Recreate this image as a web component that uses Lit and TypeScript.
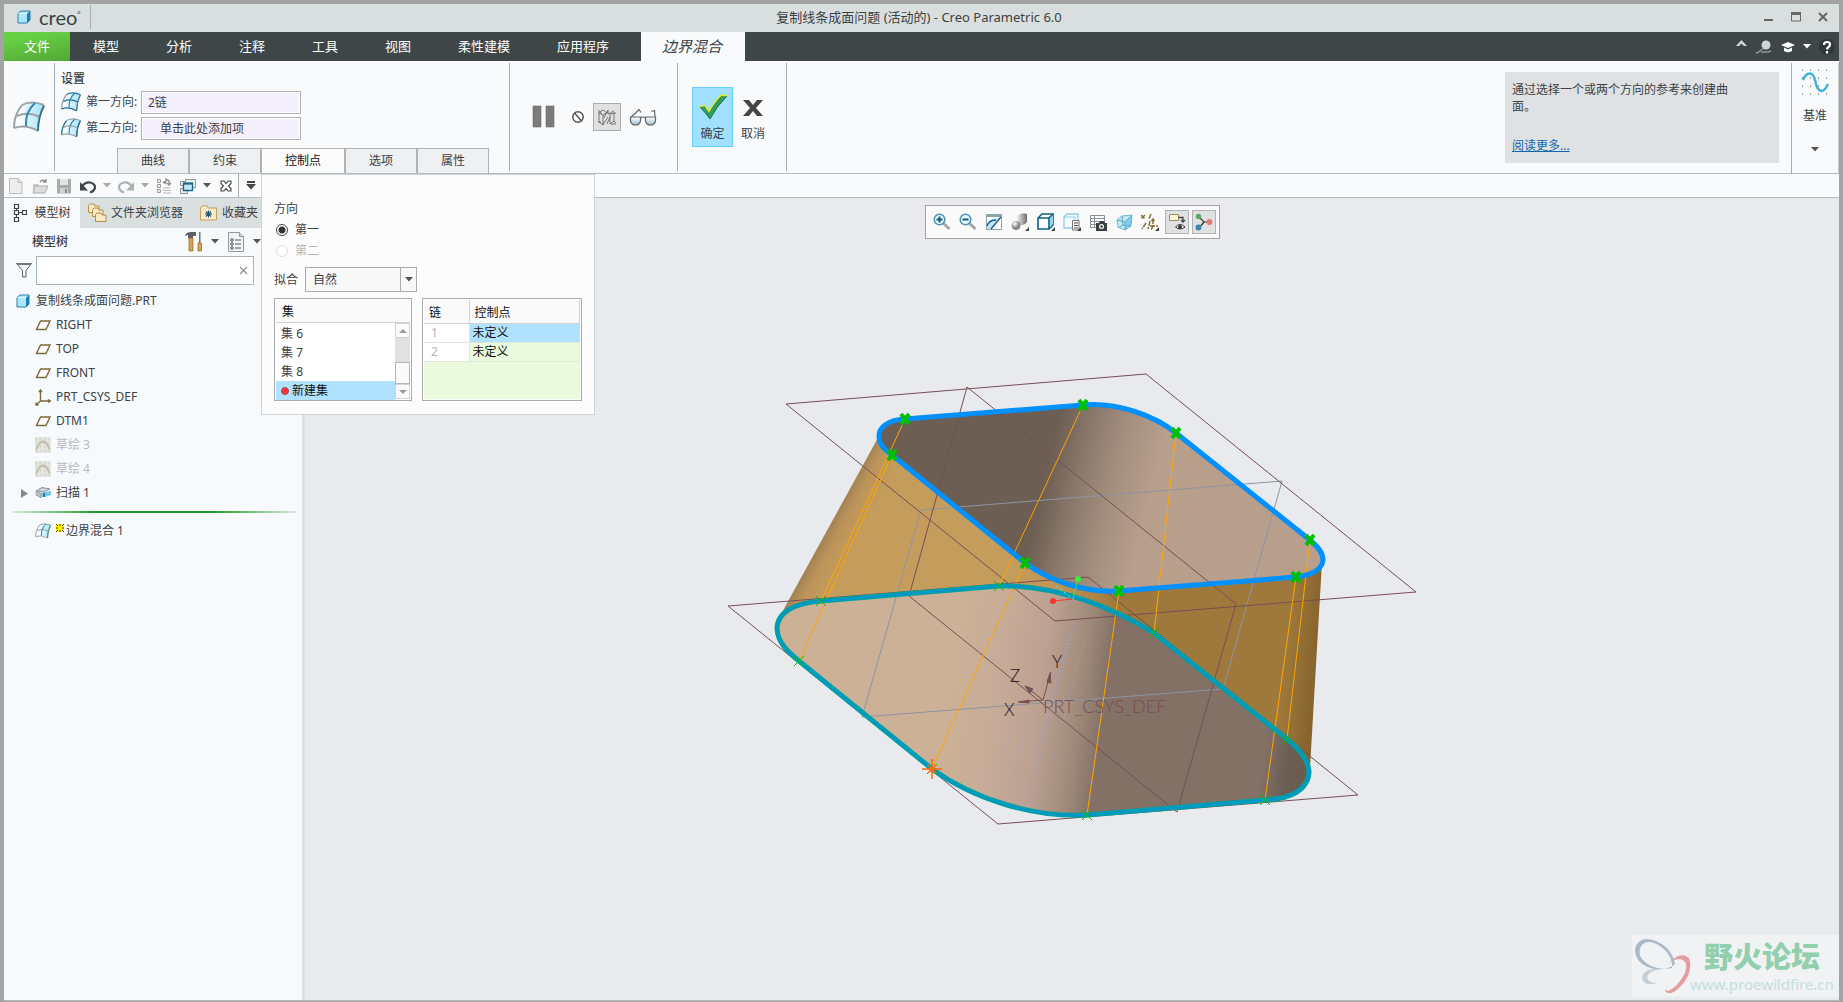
import { LitElement, html, svg, css, TemplateResult } from "lit";
import { customElement, state } from "lit/decorators.js";

const icon = (w: number, h: number, body: TemplateResult) =>
  html`<svg class="ico" width=${w} height=${h} viewBox="0 0 ${w} ${h}" aria-hidden="true">${body}</svg>`;

const caret = (fill = "#555") =>
  icon(8, 5, svg`<path d="M0 0h8L4 4.6z" fill=${fill} />`);

const partIcon = icon(14, 14, svg`
  <path d="M1 3.5 4 1h9v9l-3 3H1z" fill="#a9e8fd" stroke="#2a7ca8" />
  <path d="M10 13V4l3-3v9z" fill="#1f7fb0" /><path d="M1.5 3.5H10" stroke="#e6faff" />`);

const patch = (w: number, mode: string) => html`<svg class="ico" width=${w} height=${w} viewBox="0 0 32 32" aria-hidden="true">
  <defs><linearGradient id="pg" x1="0" x2="1"><stop offset="0.2" stop-color="#fafcfd" /><stop offset="1" stop-color="#9fe3fb" /></linearGradient></defs>
  <path d="M9 4Q18-1 31 4Q25 16 25 30Q13 23 1 27Q1 14 9 4z" fill="url(#pg)" />
  <path d="M9 4Q1 14 1 27M31 4Q25 16 25 30" fill="none" stroke=${mode === "b" ? "#1c6e96" : "#9aa3a8"} stroke-width="2" />
  <path d="M9 4Q18-1 31 4M1 27Q13 23 25 30M4 15Q15 10 27 16" fill="none" stroke=${mode === "a" ? "#1c6e96" : "#9aa3a8"} stroke-width="2" />
  <path d="M22 2Q12 11 13 25" fill="none" stroke="#2a88b4" stroke-width="2" />
  <path d="M31 5Q25 16 25 30" fill="none" stroke="#2f6f8c" stroke-width="1.6" /></svg>`;

const planeIcon = icon(16, 16, svg`<path d="M5.500 4h9.500l-4 8.500H1.500z" fill="#fbfbf6" stroke="#7d6a3d" stroke-width="1.400" />`);
const csysIcon = icon(16, 17, svg`<path d="M5.500 12V1M5.500 12 1 16M5.500 12H15M4 3l1.500-2L7 3M13 10.500 15.500 12l-2.500 1.500M1 13.500V16h2.500" fill="none" stroke="#7d6a3d" stroke-width="1.400" />`);
const sketchIcon = icon(16, 16, svg`<rect width="16" height="16" fill="#e3e3e0" /><path d="M1.500 12.500Q4 4.500 8 4.500T14.500 12.500" fill="none" stroke="#c0bda4" stroke-width="1.800" /><path d="M1 2h15M1 6h15M1 10h15M1 14h15" stroke="#c5c2b4" stroke-dasharray="1 3" />`);
const sweepIcon = icon(17, 14, svg`<path d="M1 5 7 1.500l8 1.500-6 3z" fill="#cfd6da" stroke="#8a9499" /><path d="M1 5v4l5 3V7l10-2v4l-6 2-1.500-1L6 12" fill="#7fc4e2" /><path d="M1 5l5 2v5L1 9z" fill="#b6c2c8" stroke="#8a9499" stroke-width=".6" /><path d="M9 7v4" stroke="#1c7dab" stroke-width="2" />`);

const undo = (c: string, flip = false) => icon(16, 16, svg`<g transform=${flip ? "translate(16 0) scale(-1 1)" : ""}>
  <path d="M2 8.500Q5 4 10 4.500Q15 5.500 15 9.500Q14.500 13 10 14.500" fill="none" stroke=${c} stroke-width="2.200" /><path d="M0 4v8.500h8z" fill=${c} /></g>`);

const quickIcons = {
  create: icon(16, 16, svg`<path d="M1.500.500h8.500l4 4v11H1.500z" fill="#eeeeec" stroke="#b9bcbc" /><path d="M10 .500v4h4" fill="#dcdcda" stroke="#b9bcbc" />`),
  open: icon(16, 16, svg`<path d="M1 6h5l1 2h6v7H1z" fill="#c9c9c7" /><path d="M3 8h13l-3 7H1z" fill="#dddddb" stroke="#adadab" /><path d="M8 4q2-3 5-1M14 1v3h-3" fill="none" stroke="#8e8e8c" stroke-width="1.500" />`),
  save: icon(16, 16, svg`<path d="M1 1h14v14.500H1z" fill="#a9abab" /><path d="M4 1h8v6H4z" fill="#e3e4e4" /><path d="M4 10h8v5H4z" fill="#d0d2d2" /><path d="M9 11h2v4H9z" fill="#8c8e8e" />`),
  regen: icon(16, 16, svg`<path d="M1.500 1.500h3v3h-3zM1.500 6.500h3v3h-3zM1.500 11.500h3v3h-3z" fill="#eee" stroke="#9a9a9a" /><path d="M7 10h7M7 12.500h8M7 15h8" stroke="#b5b5b5" /><path d="M7 4h3V1l3 2M10 6l-3-2M13 2v5M15 5l-2 2-2-2" fill="none" stroke="#8c8c8c" stroke-width="1.300" />`),
  windows: icon(16, 16, svg`<path d="M5.500 1.500h10v8h-10zM.500 3.500h5v4h-5zM.500 10.500h7v5h-7z" fill="#eef0f0" stroke="#8d9294" /><path d="M3.500 5.500h9v7h-9z" fill="#bdeafb" stroke="#1b6384" stroke-width="1.300" /><path d="M3 5.500h10" stroke="#1b6384" stroke-width="2" />`),
  close: icon(12, 12, svg`<path d="M1 1h3l2 2.500L8 1h3v2.500L8.500 6 11 8.500V11H8L6 8.500 4 11H1V8.500L3.500 6 1 3.500z" fill="#fff" stroke="#444" stroke-width="1.100" />`),
};

const mag = (plus: boolean) => icon(18, 18, svg`<path d="M10 10l6.500 6" stroke="#a3a7aa" stroke-width="3" /><circle cx="6.500" cy="6.500" r="5.300" fill="#e4f6fd" stroke="#4e93b2" stroke-width="1.500" /><path d=${plus ? "M3.500 6.500h6M6.500 3.500v6" : "M3.500 6.500h6"} stroke="#14577a" stroke-width="2" />`);
const more = svg`<path d="M18 14v4h-4z" fill="#444" />`;
const viewIcons = [
  { n: "放大", i: mag(true) },
  { n: "缩小", i: mag(false) },
  { n: "重画", i: icon(16, 16, svg`<path d="M0 0h16v16H0z" fill="#8fa3ac" /><path d="M1 3h14v12H1z" fill="#fdfefe" /><path d="M15 3 5 15H1v-3q2-6 6-7z" fill="#bfe6f5" /><path d="M15 3v12H5z" fill="#fff" /><path d="M15 3 5 15M1 12q2-6 9-6" fill="none" stroke="#12597e" stroke-width="1.300" />`) },
  { n: "着色", i: icon(18, 18, svg`<defs><radialGradient id="gs" cx=".35" cy=".3"><stop offset="0" stop-color="#fff" /><stop offset="1" stop-color="#828282" /></radialGradient><linearGradient id="gt"><stop offset="0" stop-color="#eee" /><stop offset="1" stop-color="#6e6e6e" /></linearGradient></defs><path d="M6 3q5-4 10-2v8q-3 4-9 3z" fill="url(#gt)" /><circle cx="5" cy="12.500" r="4.500" fill="url(#gs)" />${more}`) },
  { n: "显示样式", i: icon(18, 18, svg`<path d="M1 5 5 1h11v11l-4 4H1z" fill="#fff" stroke="#0f5d86" stroke-width="1.600" /><path d="M13 5l3-3v9l-3 3z" fill="#8fd8f5" /><path d="M1 5h11v11M12 5l4-4" fill="none" stroke="#0f5d86" stroke-width="1.600" />${more}`) },
  { n: "已保存方向", i: icon(18, 18, svg`<path d="M1 4 4 1h11v11l-3 3H1z" fill="#f4fbfe" stroke="#8ecde6" stroke-width="1.300" /><path d="M1 4h11v11" fill="none" stroke="#8ecde6" /><path d="M9.500 7.500H16V17H9.500z" fill="#f4f4f4" stroke="#777" /><path d="M11 10h4M11 12.500h4M11 15h4" stroke="#555" />${more}`) },
  { n: "视图管理器", i: icon(17, 17, svg`<path d="M.500 1.500h14v12H.500zM.500 4.500h14M.500 7.500h14M.500 10.500h14M4.500 1.500v12" fill="#fbfbfb" stroke="#8d9092" /><path d="M6 9h3l1-2h4l1 2h2v8H6z" fill="#3d4042" /><circle cx="11.500" cy="12.500" r="2.500" fill="#fff" /><circle cx="11.500" cy="12.500" r="1.300" fill="#3d4042" />`) },
  { n: "透视图", i: icon(17, 17, svg`<path d="M1 6 6 2l10-1-1 11-6 4-7-3z" fill="#c3e8f6" stroke="#74b9d5" /><path d="M1 6l8 2 7-7M9 8v8M6 2l1 9 8 1M7 11l-5 3" fill="none" stroke="#5fa9c8" /><path d="M9 8l7-7-1 11-6 4z" fill="#63b8dc" opacity=".6" />`) },
  { n: "基准显示过滤器", i: icon(18, 18, svg`<path d="M0 2l4 4M4 2 0 6M10 1 8 6M5 10l-4 6M9 8l-2 8M9 13h8M12 6v7l-2 4M10.500 8 12 6l1.500 2" fill="none" stroke="#86703b" stroke-width="1.500" stroke-dasharray="5 1" />${more}`) },
];
const viewToggles = [
  { n: "注释显示", i: icon(18, 18, svg`<path d="M1.500 1.500h9v6h-9z" fill="#fff8d7" stroke="#9a8b66" /><path d="M11 4.500h4V9M13 7l2 2 2-2" fill="none" stroke="#444" stroke-width="1.300" /><path d="M7.500 14q4.500-5 9.500 0q-5 4-9.500 0z" fill="#fff" stroke="#333" /><circle cx="12" cy="14" r="2" fill="#333" />`) },
  { n: "旋转中心", i: icon(18, 18, svg`<path d="M4 4l5 5h6M9 9l-5 6" fill="none" stroke="#333" stroke-width="1.200" /><circle cx="3.500" cy="3.500" r="2.700" fill="#5ba867" /><circle cx="14.500" cy="9" r="2.900" fill="#e9797b" /><circle cx="3.500" cy="14.500" r="2.900" fill="#3686ae" />`) },
];

const UPPER = "M905 419C888 420 879 427 879 436C879 445 885 450 892 455L1025 563C1050 581 1085 593 1119 591L1296 577C1312 575 1322 569 1323 560C1323 552 1317 546 1310 540L1176 433C1155 416 1118 402 1083 405Z";
const LOWER = "M821 601C795 603 777 612 777 629C778 643 788 652 799 661L932 769C975 800 1035 818 1087 815L1265 800C1290 799 1309 790 1309 771C1308 759 1298 748 1287 739L1154 633C1114 608 1055 584 999 586Z";
const RULINGS = [
  [905, 419, 821, 601], [892, 455, 799, 661], [1083, 405, 999, 586], [1025, 563, 932, 769],
  [1119, 591, 1087, 815], [1176, 433, 1154, 633], [1310, 540, 1287, 739], [1296, 577, 1265, 800],
];

@customElement("model-view")
class ModelView extends LitElement {
  static styles = css`
    :host { display: block; height: 100%; }
    svg { display: block; width: 100%; height: 100%; }
    .plane { fill: none; stroke: #784e54; }
    .mid { fill: none; stroke: #8d94a2; }
    .rule { stroke: #ffa500; stroke-width: 1; }
    .upper { fill: none; stroke: #0090ff; stroke-width: 5; }
    .lower { fill: none; stroke: #00a0a8; stroke-width: 5; }
    .core { fill: none; stroke: #0090e8; stroke-width: 1; }
    .bold { stroke: #00c000; stroke-width: 4; }
    .thin { stroke: #00c000; stroke-width: 1; }
    .scan { fill: none; stroke: #9ba4e6; stroke-dasharray: 1 3; }
    .axis { font: 300 17px Lato, "Liberation Sans", sans-serif; fill: #1a1214; }
    .csys { font: 300 18px Lato, "Liberation Sans", sans-serif; fill: #784e54; }
  `;
  render() {
    return html`<svg viewBox="305 198 1534 803" preserveAspectRatio="xMidYMid meet" role="img" aria-label="边界混合预览">
      <defs>
        <linearGradient id="wl" gradientUnits="userSpaceOnUse" x1="830" y1="525" x2="858" y2="540">
          <stop offset="0" stop-color="#a38254" /><stop offset=".35" stop-color="#bc945a" /><stop offset="1" stop-color="#c49d5c" />
        </linearGradient>
        <linearGradient id="wr" gradientUnits="userSpaceOnUse" x1="1010" y1="590" x2="1320" y2="620">
          <stop offset="0" stop-color="#c49d5c" /><stop offset=".16" stop-color="#c09355" /><stop offset=".35" stop-color="#9f793b" />
          <stop offset=".9" stop-color="#9f793b" /><stop offset="1" stop-color="#87642f" />
        </linearGradient>
        <linearGradient id="ui" gradientUnits="userSpaceOnUse" x1="1045" y1="476" x2="1150" y2="501">
          <stop offset="0" stop-color="#6c5e52" /><stop offset=".3" stop-color="#8a786b" /><stop offset=".6" stop-color="#a18d7d" /><stop offset="1" stop-color="#b89f8b" />
        </linearGradient>
        <linearGradient id="li" gradientUnits="userSpaceOnUse" x1="950" y1="700" x2="1300" y2="745">
          <stop offset="0" stop-color="#ccb197" /><stop offset=".13" stop-color="#c6ab97" /><stop offset=".25" stop-color="#bda292" /><stop offset=".36" stop-color="#a08b7b" /><stop offset=".44" stop-color="#837166" />
          <stop offset=".9" stop-color="#837166" /><stop offset=".97" stop-color="#6c5e53" /><stop offset="1" stop-color="#6a5c50" />
        </linearGradient>
      </defs>
      <path d="M879 436 780 616 999 590 1060 600 1025 563 892 455z" fill="url(#wl)" />
      <path d="M1025 563 990 590 1154 636 1287 741 1310 768 1322 562 1119 591z" fill="url(#wr)" />
      <path d=${LOWER} fill="url(#li)" />
      <path d=${UPPER} fill="url(#ui)" />
      <path class="scan" d="M1076 616 1028 806M1072 624 1042 740M1069 640 1024 800" />
      <path class="scan" d="M1084 640 1042 804M1015 720 992 790M1030 710 1008 798" />
      <path class="mid" d="M921 510 1282 481 1223 689 862 717z" />
      <path class="plane" d="M786 404 1146 374 1416 592 1055 621z" />
      <path class="plane" d="M967 387 1236 604 1177 812 909 596z" />
      <path class="plane" d="M728 606 1088 577 1358 795 998 824z" />
      ${RULINGS.map(([a, b, c, d]) => svg`<path class="rule" d="M${a} ${b}L${c} ${d}" />`)}
      <path class="lower" d=${LOWER} /><path class="core" d=${LOWER} />
      <path class="upper" d=${UPPER} />
      ${RULINGS.map(([a, b, c, d]) => svg`
        <path class="bold" d="M${a - 4} ${b - 5}l8 10M${a + 4} ${b - 5}l-8 10" />
        <path class="thin" d="M${c - 5} ${d - 5}l10 10M${c + 5} ${d - 5}l-10 10" />`)}
      <path d="M932 759v20M922 769h20M928 765l8 8M936 765l-8 8" stroke="#ff6a00" stroke-width="1.500" />
      <path d="M1053 601 1073 599" stroke="#ff3232" /><circle cx="1053" cy="601" r="3" fill="#ff3232" />
      <path d="M1078 579 1073 599" stroke="#32f03c" /><circle cx="1078" cy="579" r="3" fill="#32f03c" />
      <path d="M1056 586 1073 599" stroke="#50e8e0" stroke-dasharray="3 2" />
      <g fill="#784e54" stroke="#784e54">
        <path d="M1043 700 1051 672M1043 700 1018 702M1043 700 1025 686" fill="none" />
        <path d="M1050 673l1 10-4-1zM1019 702l10-2v3zM1025 686l8 3-3 4z" />
      </g>
      <text class="axis" x="1004" y="716">X</text><text class="axis" x="1052" y="668">Y</text><text class="axis" x="1010" y="682">Z</text>
      <text class="csys" x="1043" y="713">PRT_CSYS_DEF</text>
    </svg>`;
  }
}

@customElement("app-root")
export class AppRoot extends LitElement {
  @state() direction = "1";

  static styles = css`
    :host { display: block; font: 12px/16px "Noto Sans", "Noto Sans CJK SC", sans-serif; color: #3c4144; }
    * { box-sizing: border-box; }
    button { font: inherit; color: inherit; background: none; border: 0; padding: 0; margin: 0; display: flex; align-items: center; justify-content: center; }
    input, select { font: inherit; color: inherit; margin: 0; }
    .ico { display: block; flex: none; }
    .frame { display: flex; flex-direction: column; height: 100vh; min-height: 480px; background: #a3a3a3; padding: 4px 4px 1px; }
    .title { display: flex; align-items: center; height: 28px; flex: none; background: #d9dfde; padding-bottom: 2px; }
    .side { flex: 1; display: flex; align-items: center; }
    .brand { display: flex; align-items: center; gap: 8px; height: 24px; width: 87px; padding-left: 13px; border-right: 1px solid #a9aeae; font: 20px/24px Lato, sans-serif; }
    .brand sup { font-size: 8px; line-height: 8px; }
    .caption { font-size: 13px; margin: 0; font-weight: 400; }
    .win { justify-content: flex-end; gap: 4px; padding-right: 5px; }
    .win button { width: 23px; height: 24px; }
    .menu { display: flex; height: 29px; flex: none; background: #3e4647; color: #fff; font-size: 13px; }
    .menu button { padding: 0 24px 2px 23px; }
    .menu .file { width: 66px; padding: 0 0 2px; background: linear-gradient(170deg, #66d044 20%, #53a636); }
    .menu .current { margin-left: 8px; width: 104px; padding: 0 2px 2px 0; background: #f8fafc; color: #3c4144; font-size: 15px; font-style: italic; }
    .tray { margin-left: auto; display: flex; align-items: center; gap: 8px; padding-right: 4px; }
    .menu .tray button { padding: 0; }
    .ribbon { display: flex; flex: none; height: 113px; background: #f8fafc; border-bottom: 1px solid #b2bdbf; position: relative; }
    .cell { margin: 2px 0; border-right: 1px solid #a6acae; display: flex; align-items: center; }
    .lead { width: 51px; justify-content: center; }
    .settings { width: 454px; display: flex; flex-direction: column; align-items: flex-start; padding: 7px 0 0 6px; margin-bottom: 0; border: 0; }
    .settings h2 { font-size: 12px; line-height: 18px; margin: 0 0 1px; font-weight: 500; }
    .field { display: flex; align-items: center; height: 26px; gap: 5px; }
    .field label { width: 50px; white-space: nowrap; }
    .field input { width: 160px; height: 23px; border: 1px solid #b0b3b5; box-shadow: inset 0 0 0 1px #fff; background: #f5f0fe; padding: 0 6px; outline: 0; }
    .field .add { padding-left: 18px; }
    .tabs { display: flex; margin: 7px 0 0 56px; height: 25px; }
    .tabs button { width: 72px; border: 1px solid #b0b3b5; border-bottom: 0; background: #eef0f2; }
    .tabs .on { width: 84px; background: #fcfcfc; color: #111; }
    .run { width: 169px; gap: 8px; justify-content: center; border-left: 1px solid #a6acae; }
    .run button { height: 28px; }
    .run .pressed { width: 28px; background: #e0e1e3; border: 1px solid #a9abad; }
    .confirm { width: 109px; padding: 0 0 0 14px; gap: 1px; }
    .confirm button { width: 38px; height: 60px; flex-direction: column; gap: 4px; padding-top: 2px; border: 1px solid transparent; font-size: 12px; }
    .confirm .ok { width: 41px; background: #a1e0ff; border-color: #66cdff; }
    .help { margin: 11px 12px 10px auto; width: 274px; background: #dfe1e3; padding: 9px 46px 9px 7px; display: flex; flex-direction: column; justify-content: space-between; line-height: 17px; }
    .help p { margin: 0; }
    .help a { color: #1267ae; }
    .datum { width: 48px; margin: 2px 0 0; border: 0; border-left: 1px solid #a6acae; border-right: 1px solid #c4c8ca; flex-direction: column; padding-top: 6px; background: #f8fafc; }
    .datum button { flex-direction: column; gap: 11px; }
    .datum .drop { margin-top: 23px; }
    .quick { display: flex; flex: none; height: 24px; background: #f8fafc; border-bottom: 1px solid #b2bdbf; }
    .quick button { width: 24px; }
    .quick .c { width: 14px; }
    .quick .last { border-left: 1px solid #a6acae; }
    .body { flex: 1; display: flex; min-height: 0; border-bottom: 1px solid #b2bdbf; }
    .nav { width: 301px; flex: none; background: #f7fafc; border-right: 3px solid #dce2e2; }
    .navtabs { display: flex; height: 30px; background: #dae0e0; }
    .navtabs button { gap: 4px; padding: 0 8px; white-space: nowrap; }
    .navtabs .on { background: #f7fafc; width: 76px; gap: 7px; padding: 0; }
    .navtabs .fav { padding-left: 9px; gap: 5px; }
    .head { display: flex; align-items: center; height: 27px; padding-left: 28px; }
    .head h2 { font-size: 12px; font-weight: 500; margin: 0; flex: none; width: 153px; }
    .head button { height: 24px; margin-right: 9px; }
    .search { display: flex; align-items: center; gap: 4px; padding: 1px 0 0 12px; }
    .box { display: flex; align-items: center; width: 218px; height: 29px; background: #fff; border: 1px solid #a8b4b7; padding-right: 5px; }
    .box input { flex: 1; min-width: 0; border: 0; outline: 0; background: none; height: 24px; }
    .tree { list-style: none; margin: 4px 0 0; padding: 0; }
    .tree li { display: flex; align-items: center; height: 24px; padding-left: 31px; gap: 5px; }
    .tree .root { padding-left: 12px; gap: 6px; }
    .tree .off { color: #b9bbbb; }
    .tree .group { padding-left: 17px; gap: 4px; }
    .group .ico:first-child { margin-right: 3px; }
    .tree .insert { height: 13px; padding: 0; }
    .insert hr { flex: 1; height: 2px; margin: 0 6px 0 8px; border: 0; background: linear-gradient(90deg, #dde8dd, #1b9a23 30%, #1b9a23 70%, #dde8dd); }
    .tree .fresh { height: 26px; gap: 0; }
    .fresh .ico { margin-right: 4px; }
    .fresh .star { margin: 0 2px 6px 1px; }
    .stage { flex: 1; min-width: 0; background: #e8eaed; display: grid; justify-items: center; overflow: hidden; }
    .stage > * { grid-area: 1 / 1; }
    .stage model-view { width: 100%; }
    .viewbar { display: flex; align-items: center; align-self: start; z-index: 1; margin-top: 7px; height: 34px; padding: 0 3px 0 5px; background: #fafafb; border: 1px solid #a2a3a5; gap: 3px; }
    .viewbar button { width: 23px; height: 24px; }
    .viewbar .pressed { width: 24px; background: #dfe1e3; border: 1px solid #b1b3b5; }
    .mark { justify-self: end; align-self: end; z-index: 1; display: flex; align-items: center; width: 207px; height: 62px; margin-bottom: 4px; background: #f0f2f4; }
    .mark .site { display: flex; flex-direction: column; align-items: center; color: #c3dfdf; font: 15px/22px "Noto Sans", sans-serif; margin-left: -2px; }
    .mark strong { color: #92cfad; font: 900 29px/36px "Noto Sans CJK SC", sans-serif; }
    .panel { position: absolute; left: 257px; top: 113px; z-index: 5; width: 334px; padding: 24px 12px 13px; background: #fcfcfc; border: 1px solid #cfd3d5; }
    .panel fieldset { border: 0; margin: 0; padding: 0; }
    .panel legend { padding: 0; line-height: 20px; }
    .radio { display: flex; align-items: center; height: 21px; gap: 7px; padding-left: 2px; }
    .radio input { appearance: none; width: 12px; height: 12px; border: 1px solid #444; border-radius: 50%; background: #fff; }
    .radio input:checked { background: radial-gradient(#333 0 3px, #fff 4px); }
    .radio input:disabled { border-color: #ddd; }
    .dim { color: #b4b6b8; }
    .fit { display: flex; align-items: center; gap: 7px; margin: 6px 0; }
    .combo { display: grid; width: 112px; height: 25px; border: 1px solid #a9abad; background: #f8f8f8; align-items: stretch; }
    .combo > * { grid-area: 1 / 1; }
    .combo select { appearance: none; border: 0; outline: 0; background: none; padding-left: 7px; }
    .combo span { justify-self: end; width: 16px; border-left: 1px solid #a9abad; display: flex; align-items: center; justify-content: center; pointer-events: none; }
    .lists { display: flex; gap: 10px; }
    .sets { width: 138px; height: 103px; border: 1px solid #a9abad; background: #fff; padding: 1px; display: flex; flex-direction: column; }
    .sets header { height: 23px; padding: 4px 6px 0; border-bottom: 1px solid #d0d2d4; background: #fafafb; color: #111; flex: none; }
    .scroll { display: flex; flex: 1; min-height: 0; }
    .scroll ul { list-style: none; margin: 0; padding: 1px 0 0; flex: 1; }
    .scroll li { height: 19px; padding-left: 5px; display: flex; align-items: center; gap: 3px; }
    .scroll .sel { background: #b0e2ff; color: #111; }
    .bar { width: 15px; display: flex; flex-direction: column; background: #dfe1e3; }
    .bar button { height: 15px; border: 1px solid #d0d2d4; background: #fafafa; }
    .bar .thumb { height: 22px; margin-top: auto; border-color: #b4b6b8; }
    .points { width: 160px; height: 103px; border: 1px solid #a9abad; background: #eafbdd; box-shadow: inset 0 0 0 1px #fff; padding: 1px; }
    .points table { border-collapse: collapse; width: 100%; table-layout: fixed; }
    .points th { font-weight: 400; text-align: left; height: 23px; background: #fafafb; border-bottom: 1px solid #d0d2d4; border-right: 1px solid #d0d2d4; padding: 3px 5px 0; color: #111; }
    .points td { height: 19px; line-height: 17px; padding: 0 3px; color: #111; border-bottom: 1px solid #dfe6da; }
    .points .k { width: 45px; }
    .points td.k { background: #fff; color: #b0b2b4; padding-left: 7px; border-right: 1px solid #dfe6da; }
    .points td.sel { background: #b0e2ff; }
  `;

  render() {
    return html`<div class="frame">
      <div class="title">
        <div class="side"><div class="brand">${partIcon}<span>creo<sup>°</sup></span></div></div>
        <h1 class="caption">复制线条成面问题 (活动的) - Creo Parametric 6.0</h1>
        <div class="side win">
          <button aria-label="最小化">${icon(10, 10, svg`<path d="M0 7h9v2H0z" fill="#666" />`)}</button>
          <button aria-label="最大化">${icon(10, 10, svg`<path d="M.500.500h9v8.500h-9z" fill="none" stroke="#666" /><path d="M0 0h10v3H0z" fill="#666" />`)}</button>
          <button aria-label="关闭">${icon(10, 10, svg`<path d="M1 1l8 8M9 1 1 9" stroke="#666" stroke-width="2" />`)}</button>
        </div>
      </div>
      <nav class="menu">
        <button class="file">文件</button>
        ${["模型", "分析", "注释", "工具", "视图", "柔性建模", "应用程序"].map((t) => html`<button>${t}</button>`)}
        <button class="current">边界混合</button>
        <div class="tray">
          <button aria-label="折叠功能区">${icon(11, 16, svg`<path d="M0 7 5.500 1 11 7H8L5.500 4.500 3 7z" fill="#d5dadb" />`)}</button>
          <button aria-label="搜索">${icon(18, 16, svg`<circle cx="11" cy="6" r="4.500" fill="#ccd6da" /><path d="M1 14l2-.5 5-4M6 13h7l3-1" fill="none" stroke="#8e9698" stroke-width="1.400" />`)}</button>
          <button aria-label="学习">${icon(14, 16, svg`<path d="M0 6 7 3l7 3-7 3zM3 8.500l4 2 4-2V12q-4 2.500-8 0z" fill="#fff" />`)}</button>
          <button aria-label="更多">${caret("#fff")}</button>
          <button aria-label="帮助">${icon(16, 18, svg`<circle cx="8" cy="9" r="8" fill="#33393a" /><path d="M5 7q0-3 3-3t3 2.500q0 1.500-1.500 2.500T8 11.500M8 13v2.500" fill="none" stroke="#fff" stroke-width="2.200" />`)}</button>
        </div>
      </nav>
      <div class="ribbon">
        <div class="cell lead">${patch(32, "")}</div>
        <div class="cell settings">
          <h2>设置</h2>
          <div class="field">${patch(20, "a")}<label for="d1">第一方向:</label><input id="d1" readonly value="2链" /></div>
          <div class="field">${patch(20, "b")}<label for="d2">第二方向:</label><input id="d2" class="add" readonly value="单击此处添加项" /></div>
          <div class="tabs">
            <button>曲线</button><button>约束</button><button class="on">控制点</button><button>选项</button><button>属性</button>
          </div>
        </div>
        <div class="cell run">
          <button aria-label="暂停">${icon(26, 24, svg`<path d="M2 1h8v21H2zM15 1h8v21h-8z" fill="#7c7a7b" stroke="#6f6d6e" stroke-width=".6" />`)}</button>
          <button aria-label="无预览">${icon(20, 14, svg`<circle cx="13" cy="7" r="5.200" fill="#fff" stroke="#555" stroke-width="1.500" /><path d="M9.500 3l7 8" stroke="#555" stroke-width="1.500" />`)}</button>
          <button class="pressed" aria-label="分离预览">${icon(20, 18, svg`<path d="M1 5l5-3 4 3M2 5v9l4 3 5-8M6 7v10M2 5l4 2 5-3M11 2l-4 8M11 2v4l6-3M13 6v10l4-3V4M13 6l6-1M10 16l3-7M1 14h3M17 13l2 2M1 2l4 4M14 16h5" fill="none" stroke="#6a6a6a" stroke-width=".9" /></g>`)}</button>
          <button aria-label="预览">${icon(28, 18, svg`<defs><linearGradient id="gl" x1="0" x2="0" y1="0" y2="1"><stop offset="0" stop-color="#fff" /><stop offset="1" stop-color="#9fbfd0" /></linearGradient></defs><path d="M1.500 9h10v4q-1 4-5 4t-5-4zM16.500 9h10v4q-1 4-5 4t-5-4z" fill="url(#gl)" stroke="#666" stroke-width="1.200" /><path d="M2 9q4-3 8-7.500l2 3M26 9 25.500 2.500l-3 1M11.500 10q2.500-2 5 0" fill="none" stroke="#666" stroke-width="1.200" />`)}</button>
        </div>
        <div class="cell confirm">
          <button class="ok">${icon(30, 28, svg`<path d="M2 13l5-1 4 6Q17 8 24 2h5Q18 13 12 25Q8 19 2 13z" fill="#2e9d62" stroke="#1e6b3c" /><path d="M2 12.500l5-1 4 6Q17 7 23 1.500h6" fill="none" stroke="#dcee1c" stroke-width="1.500" />`)}确定</button>
          <button>${icon(22, 28, svg`<path d="M1 6h6l4 5 4-5h6l-7 8 7 8h-6l-4-5-4 5H1l7-8z" fill="#454545" />`)}取消</button>
        </div>
        <div class="help"><p>通过选择一个或两个方向的参考来创建曲面。</p><a href="#more">阅读更多...</a></div>
        <div class="cell datum">
          <button>${icon(28, 28, svg`<path d="M1 1h27M1 9h27M1 17h27M1 25h27" stroke="#444" stroke-dasharray="1 7" /><path d="M2 11Q5 4 9 4.500Q13 5 14.500 13T20 22Q24 22 27 15" fill="none" stroke="#3fb0e0" stroke-width="2.400" />`)}基准</button>
          <button class="drop" aria-label="基准选项">${caret()}</button>
        </div>
        ${this.panel()}
      </div>
      <div class="quick">
        <button aria-label="新建">${quickIcons.create}</button>
        <button aria-label="打开">${quickIcons.open}</button>
        <button aria-label="保存">${quickIcons.save}</button>
        <button aria-label="撤消">${undo("#3e4547")}</button>
        <button class="c" aria-label="撤消列表">${caret("#aaa")}</button>
        <button aria-label="重做">${undo("#adb0b0", true)}</button>
        <button class="c" aria-label="重做列表">${caret("#aaa")}</button>
        <button aria-label="重新生成">${quickIcons.regen}</button>
        <button aria-label="窗口">${quickIcons.windows}</button>
        <button class="c" aria-label="窗口列表">${caret()}</button>
        <button aria-label="关闭窗口">${quickIcons.close}</button>
        <button class="last" aria-label="自定义">${icon(10, 9, svg`<path d="M1 0h8v2H1zM0 3h10L5 8.500z" fill="#444" />`)}</button>
      </div>
      <div class="body">
        <aside class="nav">
          <div class="navtabs">
            <button class="on">${icon(14, 20, svg`<path d="M1.500 1.500h4v4h-4zM1.500 7.500h4v4h-4zM1.500 14.500h4v4h-4zM9.500 7.500h4v4h-4zM3.500 6v2M3.500 12v2M6 9.500h3" fill="none" stroke="#3c4144" stroke-width="1.200" />`)}模型树</button>
            <button>${icon(19, 20, svg`${[[0, 1], [4, 5], [7, 10]].map(([x, y]) => svg`<path d="M${x + 0.5} ${y + 1.5}l1.500-1.500h4l1 2h4v6.500h-10.500z" fill="#fbe9c4" stroke="#b48c4c" />`)}`)}文件夹浏览器</button>
            <button class="fav">${icon(17, 16, svg`<path d="M.500 3 2 .800h5L8 3h8.500v12H.500z" fill="#fbe9c4" stroke="#c0a065" /><path d="M8.500 5.500v7M5 9h7M6 6.500l5 5M11 6.500l-5 5" stroke="#17577a" stroke-width="1.100" />`)}收藏夹</button>
          </div>
          <div class="head">
            <h2>模型树</h2>
            <button aria-label="树工具">${icon(17, 20, svg`<path d="M0 4Q1 0 6 0h5v4H8v2H3V3z" fill="#5a6064" /><path d="M4 6h4v13H4z" fill="#d5a354" stroke="#8f6626" stroke-width=".7" /><path d="M14 0h1.500v11H14z" fill="#6c7276" /><path d="M13 11h3.500v8H13z" fill="#d5a354" stroke="#8f6626" stroke-width=".7" />`)}</button>
            <button aria-label="树工具列表">${caret()}</button>
            <button aria-label="树显示">${icon(16, 20, svg`<path d="M.500.500h11l4 4v15H.500z" fill="#f0f4f6" stroke="#8f9ba1" /><path d="M11.500.500v4h4" fill="#cfdbe1" stroke="#8f9ba1" /><path d="M7 8h6M7 12h6M7 16h6" stroke="#555" /><circle cx="4" cy="8" r="1.300" fill="none" stroke="#555" /><circle cx="4" cy="12" r="1.300" fill="none" stroke="#555" /><circle cx="4" cy="16" r="1.300" fill="none" stroke="#555" />`)}</button>
            <button aria-label="树显示列表">${caret()}</button>
          </div>
          <div class="search">
            ${icon(16, 15, svg`<path d="M.500.500h15L10 7.500V14H6.500V7.500z" fill="#f5f6f6" stroke="#5b6164" /><path d="M2 1h12" stroke="#777" stroke-width="2" />`)}
            <div class="box"><input aria-label="搜索模型树" /><button aria-label="清除">${icon(9, 9, svg`<path d="M1 1l7 7M8 1 1 8" stroke="#8d9294" stroke-width="1.300" />`)}</button></div>
          </div>
          <ul class="tree">
            <li class="root">${partIcon}<span>复制线条成面问题.PRT</span></li>
            ${["RIGHT", "TOP", "FRONT"].map((t) => html`<li>${planeIcon}<span>${t}</span></li>`)}
            <li>${csysIcon}<span>PRT_CSYS_DEF</span></li>
            <li>${planeIcon}<span>DTM1</span></li>
            ${["草绘 3", "草绘 4"].map((t) => html`<li class="off">${sketchIcon}<span>${t}</span></li>`)}
            <li class="group">${icon(7, 9, svg`<path d="M0 0l7 4.500L0 9z" fill="#888" />`)}${sweepIcon}<span>扫描 1</span></li>
            <li class="insert"><hr /></li>
            <li class="fresh">${patch(16, "")}<svg class="ico star" width="8" height="8" viewBox="0 0 8 8"><path d="M0 0h8v8H0z" fill="#ffee00" /><path d="M4 0v2M4 6v2M0 4h2M6 4h2M0 0l2 2M8 0 6 2M0 8l2-2M8 8 6 6" stroke="#333" stroke-width=".9" /></svg><span>边界混合 1</span></li>
          </ul>
        </aside>
        <main class="stage">
          <model-view></model-view>
          <div class="viewbar">
            ${viewIcons.map((v) => html`<button aria-label=${v.n}>${v.i}</button>`)}
            ${viewToggles.map((v) => html`<button class="pressed" aria-label=${v.n}>${v.i}</button>`)}
          </div>
          <div class="mark">
            ${icon(60, 62, svg`<g fill-rule="evenodd">
              <path d="M4 11Q9 0 24 6Q40 13 43 29Q38 35 22 34Q4 30 3 15zM9 11Q4 20 14 28Q26 36 40 33Q41 20 28 11Q15 3 9 11z" fill="#a9b9c6" />
              <path d="M35 30Q48 15 57 23Q62 38 48 52Q38 62 33 56Q33 54 36 56Q46 52 53 38Q57 26 48 24Q40 24 35 30z" fill="#e79da0" />
              <path d="M32 34Q12 32 10 42Q10 52 26 48Q16 48 15 42Q17 35 32 34z" fill="#c5cfd7" /></g>`)}
            <div class="site"><strong>野火论坛</strong><span>www.proewildfire.cn</span></div>
          </div>
        </main>
      </div>
    </div>`;
  }

  private panel() {
    return html`<section class="panel">
      <fieldset>
        <legend>方向</legend>
        <label class="radio"><input type="radio" name="dir" value="1" .checked=${this.direction === "1"} @change=${() => (this.direction = "1")} />第一</label>
        <label class="radio dim"><input type="radio" name="dir" value="2" disabled />第二</label>
      </fieldset>
      <div class="fit"><label for="fit">拟合</label>
        <div class="combo"><select id="fit"><option>自然</option></select><span>${caret()}</span></div>
      </div>
      <div class="lists">
        <div class="sets">
          <header>集</header>
          <div class="scroll">
            <ul>
              ${[6, 7, 8].map((n) => html`<li>集 ${n}</li>`)}
              <li class="sel">${icon(8, 8, svg`<circle cx="4" cy="4" r="3.500" fill="#ff3038" stroke="#a8474b" />`)}新建集</li>
            </ul>
            <div class="bar">
              <button aria-label="向上滚动">${icon(8, 4, svg`<path d="M0 4h8L4 0z" fill="#999" />`)}</button>
              <button class="thumb" aria-label="滚动条"></button>
              <button aria-label="向下滚动">${icon(8, 4, svg`<path d="M0 0h8L4 4z" fill="#999" />`)}</button>
            </div>
          </div>
        </div>
        <div class="points">
          <table>
            <thead><tr><th class="k">链</th><th>控制点</th></tr></thead>
            <tbody>
              <tr><td class="k">1</td><td class="sel">未定义</td></tr>
              <tr><td class="k">2</td><td>未定义</td></tr>
            </tbody>
          </table>
        </div>
      </div>
    </section>`;
  }
}
